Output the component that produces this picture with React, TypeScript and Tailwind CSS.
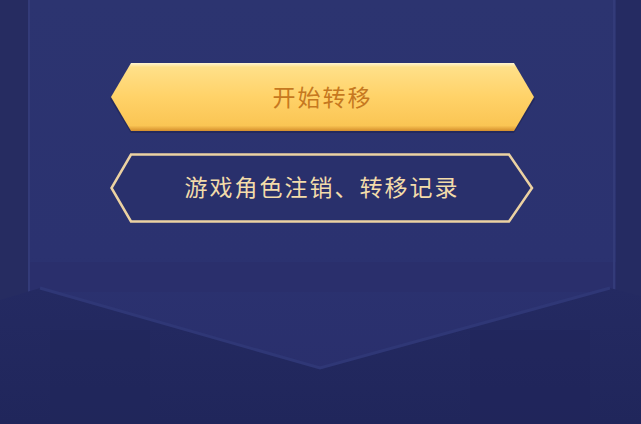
import React from "react";

const cjk = '"Noto Sans CJK SC", "Noto Sans", sans-serif';

function Backdrop() {
  return (
    <svg className="absolute inset-0 h-full w-full" viewBox="0 0 641 424" preserveAspectRatio="none">
      <defs>
        <linearGradient id="panel" x1="0" y1="0" x2="0" y2="1">
          <stop offset="0" stopColor="#2c3470" />
          <stop offset="0.6" stopColor="#2b3270" />
          <stop offset="1" stopColor="#292e6b" />
        </linearGradient>
        <linearGradient id="lower" x1="0" y1="0" x2="0" y2="1">
          <stop offset="0" stopColor="#242a62" />
          <stop offset="1" stopColor="#20265b" />
        </linearGradient>
      </defs>
      <rect width="641" height="424" fill="#252b62" />
      <rect x="0" y="0" width="28" height="424" fill="#262c61" />
      <rect x="28" y="0" width="588" height="424" fill="url(#panel)" />
      <rect x="28" y="262" width="588" height="30" fill="#2a2f6c" />
      <line x1="29" y1="0" x2="29" y2="300" stroke="#333b79" strokeWidth="2" />
      <line x1="614" y1="0" x2="614" y2="300" stroke="#333b79" strokeWidth="2" />
      <polygon points="0,300 40,288 320,368 610,288 641,296 641,424 0,424" fill="url(#lower)" />
      <polyline points="40,288 320,368 610,288" fill="none" stroke="#2f3776" strokeWidth="3" />
      <rect x="50" y="330" width="100" height="94" fill="#20255a" opacity="0.5" />
      <rect x="470" y="330" width="120" height="94" fill="#1f2459" opacity="0.5" />
    </svg>
  );
}

function GoldButton({ label }: { label: string }) {
  return (
    <div className="relative flex h-[70px] w-[425px] items-center justify-center">
      <svg className="absolute inset-0 h-full w-full" viewBox="0 0 425 70">
        <defs>
          <linearGradient id="gold" x1="0" y1="0" x2="0" y2="1">
            <stop offset="0" stopColor="#fff6d2" />
            <stop offset="0.06" stopColor="#ffe089" />
            <stop offset="0.5" stopColor="#ffd268" />
            <stop offset="0.92" stopColor="#fac554" />
            <stop offset="1" stopColor="#d48e2c" />
          </linearGradient>
        </defs>
        <polygon points="21,1 404,1 425,35 404,69 21,69 0,35" fill="#1b1f4a" opacity="0.5" transform="translate(0,1)" />
        <polygon points="21,0 404,0 424,34 404,68 21,68 1,34" fill="url(#gold)" />
      </svg>
      <span
        className="relative -mt-[4px] text-[23px] tracking-[2px] text-[#c67820]"
        style={{ fontFamily: cjk }}
      >
        {label}
      </span>
    </div>
  );
}

function OutlineButton({ label }: { label: string }) {
  return (
    <div className="relative flex h-[70px] w-[424px] items-center justify-center">
      <svg className="absolute inset-0 h-full w-full" viewBox="0 0 424 70">
        <polygon
          points="21,1.5 399,1.5 422,35 399,68.5 21,68.5 1.5,35"
          fill="#29306c"
          stroke="#ecd2a2"
          strokeWidth="2.5"
          strokeLinejoin="miter"
        />
      </svg>
      <span
        className="relative -mt-[3px] text-[23px] tracking-[2px] text-[#f3dcaa]"
        style={{ fontFamily: cjk }}
      >
        {label}
      </span>
    </div>
  );
}

export default function App() {
  return (
    <div className="relative h-[424px] w-[641px] overflow-hidden bg-[#252b62]">
      <Backdrop />
      <div className="relative flex flex-col gap-[20px] pl-[110px] pt-[63px]">
        <GoldButton label="开始转移" />
        <OutlineButton label="游戏角色注销、转移记录" />
      </div>
    </div>
  );
}
